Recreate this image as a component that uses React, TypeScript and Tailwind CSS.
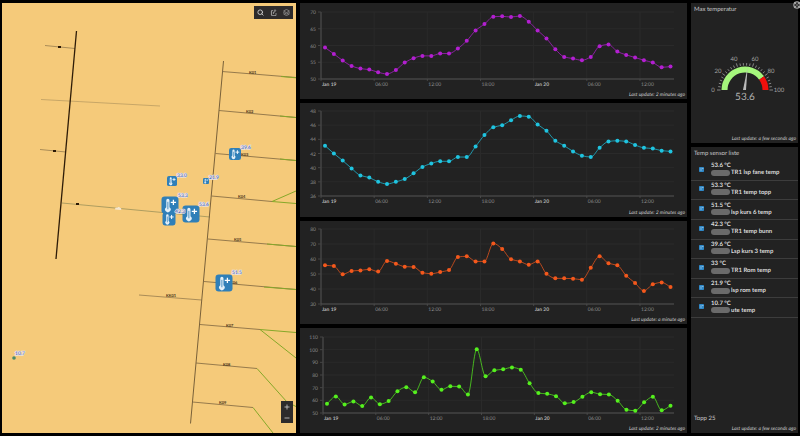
import { Layers, Search } from "lucide-react";

type TSeries = {
  name: string;
  color: string;
  min: number;
  max: number;
  step: number;
  left: number;
  top: number;
  bottom: number;
  height: number;
  updated: string;
  values: number[];
};

type TPin = {
  x: number;
  y: number;
  size: number;
  label: string;
  lx: number;
  ly: number;
};

const CHART_WIDTH = 387;
const PLOT_RIGHT = 374;

const series: TSeries[] = [
  {
    name: "Temperature, purple series",
    color: "#b31fd1",
    min: 50,
    max: 70,
    step: 5,
    left: 21,
    top: 9,
    bottom: 76,
    height: 88,
    updated: "2 minutes ago",
    values: [
      59.4, 57.5, 55.5, 53.9, 53.1, 52.8, 52, 51.5, 52.7, 54.9, 56.2, 56.9, 56.9, 57.6, 57.6, 59.1, 61.4, 64.5, 66.4, 68.6,
      68.7, 68.5, 68.8, 67.1, 64.5, 62.1, 58.9, 56.6, 56.1, 55.6, 56.6, 59.8, 60.3, 58.2, 57.2, 56.4, 55.6, 54.9, 53.5, 53.7,
    ],
  },
  {
    name: "Temperature, blue series",
    color: "#1fc4e0",
    min: 36,
    max: 48,
    step: 2,
    left: 21,
    top: 8,
    bottom: 93,
    height: 106,
    updated: "2 minutes ago",
    values: [
      43.1, 42, 41, 39.9, 38.9, 38.6, 38, 37.7, 38, 38.4, 39.2, 40.1, 40.6, 40.9, 40.9, 41.5, 41.5, 43, 44.6, 45.7,
      46, 46.7, 47.3, 47.2, 46.1, 45.2, 43.8, 43.1, 42.3, 41.7, 41.5, 42.8, 43.7, 43.8, 43.7, 43.2, 42.8, 42.7, 42.4, 42.3,
    ],
  },
  {
    name: "Temperature, orange series",
    color: "#f4581c",
    min: 30,
    max: 80,
    step: 10,
    left: 21,
    top: 8,
    bottom: 83,
    height: 95,
    updated: "a minute ago",
    values: [
      55.8, 55.3, 49.8, 52, 52.4, 53.1, 51.6, 58.7, 56.9, 54.9, 54.7, 50.9, 50.2, 51.3, 52.7, 61.3, 61.8, 58.4, 58.4, 70.4,
      66.7, 59.8, 58.4, 56.2, 58.4, 50.2, 47.1, 47.1, 46.9, 46.2, 54.2, 61.8, 57.1, 55.8, 48.9, 44, 38.7, 43.1, 44.4, 41.3,
    ],
  },
  {
    name: "Temperature, green series",
    color: "#55f01e",
    min: 50,
    max: 110,
    step: 10,
    left: 23,
    top: 9,
    bottom: 85,
    height: 97,
    updated: "2 minutes ago",
    values: [
      57.3, 63.1, 56.8, 59.1, 55.5, 62.3, 57, 59.4, 67.2, 70.4, 66.4, 78.2, 74.8, 68.3, 71.1, 70.9, 64.6, 100.4, 79, 83.7,
      84.5, 86, 84.2, 73.5, 65.7, 65.1, 63.3, 57.6, 58.6, 62.8, 66.4, 64.9, 64.6, 59.7, 52.6, 51.8, 58.4, 62.8, 52.1, 55.7,
    ],
  },
];

const timeLabels = ["Jan 19", "06:00", "12:00", "18:00", "Jan 20", "06:00", "12:00"];

const sensors = [
  { value: "53.6 °C", name: "TR1 lsp fane temp" },
  { value: "53.3 °C", name: "TR1 temp topp" },
  { value: "51.5 °C", name: "lsp kurs 6 temp" },
  { value: "42.3 °C", name: "TR1 temp bunn" },
  { value: "39.6 °C", name: "Lsp kurs 3 temp" },
  { value: "33 °C", name: "TR1 Rom temp" },
  { value: "21.9 °C", name: "lsp rom temp" },
  { value: "10.7 °C", name: "ute temp" },
];

const pins: TPin[] = [
  { x: 172, y: 181, size: 10, label: "33.0", lx: 177, ly: 174 },
  { x: 206, y: 181, size: 6, label: "21.9", lx: 209, ly: 176 },
  { x: 235, y: 154, size: 12, label: "39.6", lx: 241, ly: 146 },
  { x: 169, y: 219, size: 13, label: "42.3", lx: 175, ly: 210 },
  { x: 170, y: 205, size: 17, label: "53.3", lx: 178, ly: 194 },
  { x: 191, y: 214, size: 17, label: "53.6", lx: 199, ly: 203 },
  { x: 224, y: 283, size: 17, label: "51.5", lx: 232, ly: 271 },
];

const feeders = [
  { label: "K01", x: 249, y: 74, line: "M222 71.5L296 77.5", green: "M281 76.5L296 77.8" },
  { label: "K02", x: 246, y: 113, line: "M219 110.5L296 117.5", green: "M280 116L296 117.5" },
  { label: "K03", x: 241, y: 156, line: "M215.5 153.5L296 160.5", green: "M280 159L296 160.5" },
  { label: "K04", x: 238, y: 198, line: "M211.5 196L272 201.5", green: "M296 203.5L272 201.5L296 191" },
  { label: "K05", x: 234, y: 241, line: "M208 239L296 246.5", green: "M267 244L296 246.5" },
  { label: "K06", x: 230, y: 284, line: "M204 281.5L296 289.5", green: "M264 287L296 289.5" },
  { label: "K07", x: 226, y: 327, line: "M200 324.5L260 329.5", green: "M296 332.5L260 329.5L296 358" },
  { label: "K08", x: 223, y: 366, line: "M196 363L257 368.5", green: "M257 368.5L287 402L296 406.5" },
  { label: "K09", x: 219, y: 404, line: "M192.5 402L253 407.5", green: "M253 407.5L273 433" },
];

// Monotone cubic interpolation, so the curve never overshoots a reading
const smoothPath = (pts: { x: number; y: number }[]) => {
  const slopes = pts.slice(1).map((p, i) => (p.y - pts[i].y) / (p.x - pts[i].x));
  const tangents = pts.map((_, i) => {
    if (i === 0) return slopes[0];
    if (i === pts.length - 1) return slopes[i - 1];
    const a = slopes[i - 1];
    const b = slopes[i];
    return a * b <= 0 ? 0 : (2 * a * b) / (a + b);
  });

  return pts
    .map((p, i) => {
      if (i === 0) return `M${p.x} ${p.y}`;
      const prev = pts[i - 1];
      const dx = (p.x - prev.x) / 3;
      return `C${prev.x + dx} ${prev.y + tangents[i - 1] * dx} ${p.x - dx} ${p.y - tangents[i] * dx} ${p.x} ${p.y}`;
    })
    .join("");
};

const LastUpdate = ({ text }: { text: string }) => (
  <p className="h-2 pr-0.5 text-right text-[5px] leading-[8px] italic text-[#d0d0d0]">
    Last update: {text}
  </p>
);

const LineChart = ({ data }: { data: TSeries }) => {
  const { min, max, step, left, top, bottom, values, color } = data;
  const yOf = (v: number) => bottom - ((v - min) / (max - min)) * (bottom - top);
  const firstX = left + 4;
  const gap = (370.5 - firstX) / (values.length - 1);
  const points = values.map((v, i) => ({ x: firstX + i * gap, y: yOf(v) }));
  const ticks = Array.from({ length: (max - min) / step + 1 }, (_, i) => min + i * step);
  const timeX = (i: number) => left + i * ((340 - left) / 6);

  return (
    <section className="bg-[#222222]">
      <svg
        viewBox={`0 0 ${CHART_WIDTH} ${data.height}`}
        className="block w-full"
        role="img"
        aria-label={data.name}
      >
        {ticks.map((t) => (
          <g key={t}>
            <line x1={left} x2={PLOT_RIGHT} y1={yOf(t)} y2={yOf(t)} stroke="#2a2a2a" strokeWidth="1" />
            <line x1={left - 3} x2={left} y1={yOf(t)} y2={yOf(t)} stroke="#454545" strokeWidth="1" />
            <text x={left - 5} y={yOf(t) + 2} textAnchor="end" fontSize="5" fill="#8f8f8f">
              {t}
            </text>
          </g>
        ))}
        {timeLabels.map((label, i) => (
          <g key={i}>
            <line x1={timeX(i)} x2={timeX(i)} y1={top} y2={bottom} stroke="#2a2a2a" strokeWidth="1" />
            <line x1={timeX(i)} x2={timeX(i)} y1={bottom} y2={bottom + 2} stroke="#454545" strokeWidth="1" />
            <text
              x={timeX(i) + 1}
              y={bottom + 7}
              fontSize="5"
              fontWeight={label.startsWith("Jan") ? 700 : 400}
              fill={label.startsWith("Jan") ? "#b5b5b5" : "#8f8f8f"}
            >
              {label}
            </text>
          </g>
        ))}
        <path d={`M${left} ${top}V${bottom}H${PLOT_RIGHT}`} fill="none" stroke="#505050" strokeWidth="1" />
        <path d={smoothPath(points)} fill="none" stroke={color} strokeOpacity="0.8" strokeWidth="0.9" />
        {points.map((p, i) => (
          <circle key={i} cx={p.x} cy={p.y} r="2" fill={color} />
        ))}
      </svg>
      <LastUpdate text={data.updated} />
    </section>
  );
};

const Pin = ({ pin }: { pin: TPin }) => (
  <g transform={`translate(${pin.x - pin.size / 2} ${pin.y - pin.size / 2}) scale(${pin.size / 16})`}>
    <rect width="16" height="16" rx="3" fill="#2f7fb8" />
    <path d="M4.5 3.5a1.5 1.5 0 0 1 3 0V10a2.6 2.6 0 1 1-3 0Z" fill="#e4f0f8" />
    <path d="M6 5v7" stroke="#2f7fb8" strokeWidth="0.8" />
    <path d="M11.2 3v5M8.7 5.5h5" stroke="#ffffff" strokeWidth="1.2" />
  </g>
);

const PinLabel = ({ x, y, text }: { x: number; y: number; text: string }) => (
  <text
    x={x}
    y={y + 3}
    fontSize="5"
    fill="#3552b8"
    stroke="#e9e4e6"
    strokeWidth="1.4"
    paintOrder="stroke"
  >
    {text}
  </text>
);

const SensorMap = () => (
  <section className="relative bg-[#f5ca7a]">
    <svg
      viewBox="2 3 294 430"
      preserveAspectRatio="xMidYMid slice"
      className="block h-full w-full"
      role="img"
      aria-label="Sensor map"
    >
      <g fill="none" stroke="#8a7148" strokeWidth="0.7">
        <path d="M45 45.5L75 48.5M40 149.5L66 152" />
        <path d="M41 99.5L160 106" stroke="#b3965f" />
        <path d="M62 203L210 217" stroke="#8f8a55" />
        <path d="M139 295L201.5 300" />
        <path d="M223.5 61L190.5 423.5" stroke="#6b5532" strokeWidth="0.9" />
      </g>
      <path d="M76.5 31L56 259" stroke="#2e1c08" strokeWidth="1.3" />
      <g fill="#2a1805">
        <rect x="58" y="46" width="3" height="2" />
        <rect x="53" y="150" width="3" height="2" />
        <rect x="76" y="203" width="3" height="2" />
      </g>
      <path d="M115 209.5c0-2 1.6-2.5 2-1.5c.5-1.5 3-1.5 3 0c2 0 1.5 2 .5 2Z" fill="#f4e6cf" />

      {feeders.map((f) => (
        <g key={f.label}>
          <path d={f.line} fill="none" stroke="#7d6640" strokeWidth="0.8" />
          <path d={f.green} fill="none" stroke="#86a829" strokeWidth="1" />
          <text x={f.x} y={f.y} fontSize="4" fontWeight="700" fill="#3b2a12">
            {f.label}
          </text>
        </g>
      ))}
      <text x="166" y="297" fontSize="4" fontWeight="700" fill="#3b2a12">
        KK01
      </text>

      {pins.map((pin) => (
        <Pin key={pin.label} pin={pin} />
      ))}
      <circle cx="14" cy="358" r="1.8" fill="#4b8a6a" />
      {pins.map((pin) => (
        <PinLabel key={pin.label} x={pin.lx} y={pin.ly} text={pin.label} />
      ))}
      <PinLabel x={15} y={352} text="10.7" />
    </svg>

    <div className="absolute top-[3px] right-[3px] flex h-[13px] items-center bg-[#2d2b2b] text-[#d0d0d0]">
      <button type="button" aria-label="Search" className="flex w-[13px] justify-center">
        <Search className="size-[7px]" strokeWidth={3} />
      </button>
      <button type="button" aria-label="Legend" className="flex w-[13px] justify-center">
        <svg viewBox="0 0 14 14" className="size-[7px]" fill="none" stroke="#b8b8b8" strokeWidth="1.3">
          <path d="M6 3H3v10h9V8M1.500 6h3M1.500 10h3M7 10V6h3V1.500M8 3.500l2-2l2 2" />
        </svg>
      </button>
      <button type="button" aria-label="Layers" className="flex w-[13px] justify-center">
        <Layers className="size-[7px]" color="#b8b8b8" strokeWidth={2} />
      </button>
    </div>

    <div className="absolute right-[3px] bottom-[10px] flex w-3 flex-col bg-[#2d2b2b] text-[#d0d0d0]">
      <button type="button" aria-label="Zoom in" className="flex h-[11px] items-center justify-center">
        <svg viewBox="0 0 6 6" className="size-[6px]" stroke="currentColor" strokeWidth="0.8">
          <path d="M3 0.5v5M0.5 3h5" />
        </svg>
      </button>
      <button type="button" aria-label="Zoom out" className="flex h-[11px] items-center justify-center">
        <svg viewBox="0 0 6 6" className="size-[6px]" stroke="currentColor" strokeWidth="0.8">
          <path d="M0.5 3h5" />
        </svg>
      </button>
    </div>
  </section>
);

const Gauge = ({ value }: { value: number }) => {
  const cx = 54;
  const cy = 73;
  const at = (percent: number, r: number) => {
    const angle = Math.PI * (1 - percent / 100);
    return { x: cx + r * Math.cos(angle), y: cy - r * Math.sin(angle) };
  };
  const arc = (from: number, to: number, r: number) => {
    const a = at(from, r);
    const b = at(to, r);
    return `M${a.x} ${a.y}A${r} ${r} 0 0 1 ${b.x} ${b.y}`;
  };
  const tip = at(value, 23);
  const scale = [
    { text: "0", x: 22, y: 75 },
    { text: "20", x: 27, y: 56 },
    { text: "40", x: 43, y: 44 },
    { text: "60", x: 64, y: 44 },
    { text: "80", x: 80, y: 56 },
    { text: "100", x: 88, y: 75 },
  ];

  return (
    <svg viewBox="0 32 107 56" className="block w-full" role="img" aria-label={`Max temperatur ${value}`}>
      {Array.from({ length: 26 }, (_, i) => {
        const a = at(i * 4, 24.5);
        const b = at(i * 4, i % 5 === 0 ? 28 : 27);
        return <line key={i} x1={a.x} y1={a.y} x2={b.x} y2={b.y} stroke="#a0a0a0" strokeWidth="0.8" />;
      })}
      <path d={arc(0, 80, 20.5)} fill="none" stroke="#a5f77c" strokeWidth="6" />
      <path d={arc(80, 100, 20.5)} fill="none" stroke="#f2100c" strokeWidth="6" />
      <path d={`M${cx - 2} ${cy}L${tip.x} ${tip.y}L${cx + 1} ${cy}Z`} fill="#b9b9b9" />
      {scale.map((s) => (
        <text key={s.text} x={s.x} y={s.y} textAnchor="middle" fontSize="6" fill="#a3a3a3">
          {s.text}
        </text>
      ))}
      <text x={cx} y="83" textAnchor="middle" fontSize="10" fill="#b0b0b0">
        {value}
      </text>
    </svg>
  );
};

const SensorList = () => (
  <section className="flex grow flex-col bg-[#222222]">
    <h2 className="px-[3px] pt-[3px] pb-[3px] text-[6px] leading-[8px] text-[#c8c8c8]">Temp sensor liste</h2>
    <ul className="grid h-[157px] grid-rows-8">
      {sensors.map((sensor) => (
        <li key={sensor.name} className="flex items-center gap-[7px] border-b border-[#3d3d3d] pb-0.5 pl-2">
          <svg viewBox="0 0 10 10" className="size-[5px] shrink-0">
            <rect width="10" height="10" rx="1.5" fill="#2f87c6" />
            <path d="M4 2v6M6 3h3" stroke="#cfe6f5" strokeWidth="1" />
          </svg>
          <div className="text-[6px] leading-[7px] font-bold whitespace-nowrap text-[#dcdcdc]">
            <p>{sensor.value}</p>
            <p className="flex items-center gap-px">
              <span className="h-[6px] w-[19px] rounded-full bg-[#6a6a6a]" />
              {sensor.name}
            </p>
          </div>
        </li>
      ))}
    </ul>
    <p className="mt-auto px-[3px] text-[6px] leading-[8px] text-[#c8c8c8]">Topp 25</p>
    <div className="pt-[2px]">
      <LastUpdate text="a few seconds ago" />
    </div>
  </section>
);

const App = () => {
  return (
    <main className="relative grid min-h-screen grid-cols-[294fr_387fr_107fr] gap-1 overflow-hidden bg-black px-0.5 py-[3px] font-['Lato',sans-serif] [text-rendering:geometricPrecision]">
      <SensorMap />

      <div className="flex flex-col justify-between gap-[3px]">
        {series.map((data) => (
          <LineChart key={data.color} data={data} />
        ))}
      </div>

      <div className="flex flex-col gap-1">
        <section className="flex flex-col bg-[#222222]">
          <h2 className="px-[3px] pt-[3px] text-[6px] leading-[8px] text-[#c8c8c8]">Max temperatur</h2>
          <div className="pt-[35px] pb-[30px]">
            <Gauge value={53.6} />
          </div>
          <LastUpdate text="a few seconds ago" />
        </section>
        <SensorList />
      </div>

      <button
        type="button"
        aria-label="Expand"
        className="absolute top-px -right-px flex size-2 items-center justify-center rounded-full border border-[#8a8a8a] bg-[#333333]"
      >
        <svg viewBox="0 0 10 10" className="size-[6px]" fill="none" stroke="#c4c4c4" strokeWidth="1.2">
          <path d="M1 4V1h3M6 1h3v3M9 6v3H6M4 9H1V6M1 1l3 3M9 1L6 4M9 9L6 6M1 9l3-3" />
        </svg>
      </button>
    </main>
  );
};

export default App;
